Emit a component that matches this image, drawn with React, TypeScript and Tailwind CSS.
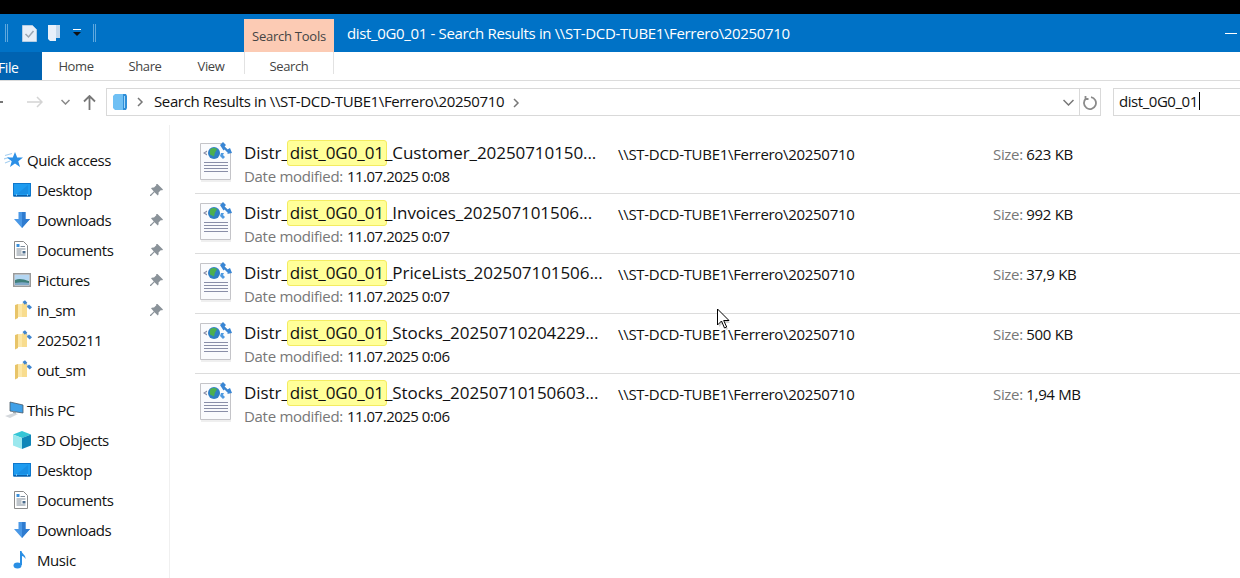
import React from "react";

const font = { fontFamily: '"Open Sans","Noto Sans",Arial,sans-serif' };

function Star() {
  return (
    <svg width="19" height="18" viewBox="0 0 19 18">
      <path d="M1 4.500l7-2M0 8l5-1.500M1 12l5-2" stroke="#a6cff0" strokeWidth="1.200" />
      <path d="M11 1l2.200 5.500h5.800l-4.700 3.700 1.700 5.800-5-3.400-5 3.400 1.700-5.800L3 6.500h5.800z" fill="#2b8fe6" />
    </svg>
  );
}
function DesktopIcon() {
  return (
    <svg width="18" height="14" viewBox="0 0 18 14">
      <rect x="0.500" y="0.500" width="17" height="12.500" fill="#1e9cf0" stroke="#0f78cc" />
      <path d="M1 12h16v1.500H1z" fill="#0b5ea8" />
      <path d="M3 12h1M14 12h1" stroke="#dff0ff" />
      <path d="M4 11L15 2v9z" fill="#1a8fe4" />
    </svg>
  );
}
function DownloadIcon() {
  return (
    <svg width="18" height="18" viewBox="0 0 18 18">
      <path d="M5.500 1h7v7h4.500l-8 9-8-9h4.500z" fill="#4a98e6" />
      <path d="M9 1h3.500v7h4.500l-8 9z" fill="#2f7cd0" />
    </svg>
  );
}
function DocIcon() {
  return (
    <svg width="16" height="18" viewBox="0 0 16 18">
      <path d="M1.500.500h9l4 4v13h-13z" fill="#fff" stroke="#8a8a8a" />
      <path d="M3.500 3h3v3h-3z" fill="#3b90dc" />
      <path d="M7.500 5.500h4.500M3.500 8h9M3.500 10h5M3.500 12h5M3.500 14h9" stroke="#7f8c99" />
      <path d="M9.500 10h3v2.500h-3z" fill="#4a6a8a" />
    </svg>
  );
}
function PicturesIcon() {
  return (
    <svg width="18" height="14" viewBox="0 0 18 14">
      <rect x="0.750" y="0.750" width="16.500" height="12.500" fill="#dbe9f5" stroke="#9a9a9a" strokeWidth="1.500" />
      <path d="M2 2h14v5H2z" fill="#b4d6f2" />
      <path d="M2 7c4-2 8-1 14 1v4H2z" fill="#3f7f7a" />
      <path d="M2 10c5-1 9-1 14 0v2H2z" fill="#7fa8c8" />
    </svg>
  );
}
function FolderShortcut() {
  return (
    <svg width="20" height="20" viewBox="0 0 20 20">
      <path d="M2 5l3-1v14l-3 1.500z" fill="#e8c468" />
      <path d="M5 4h6l3 1v12H5z" fill="#fce7a8" />
      <path d="M9 3.500l5-1V17H9z" fill="#f8dc8e" />
      <path d="M9.500 2L12 .2l2.300 2.500-1 1L15 5.500l1-1 3 2.800-2.300 2.200-3-2.800 1-1L13 3.800l-1.200 1z" fill="#3f86d0" />
    </svg>
  );
}
function ThisPc() {
  return (
    <svg width="20" height="18" viewBox="0 0 20 18">
      <path d="M6 1l13 3v8L6 10z" fill="#3fa0e8" stroke="#4a5a68" strokeWidth="0.800" />
      <path d="M1 15l9-3 4 1-8 4z" fill="#d4d8dc" />
      <path d="M9 10.500l3 .5v1.500l-3-.5z" fill="#9aa4ac" />
    </svg>
  );
}
function Objects3D() {
  return (
    <svg width="18" height="18" viewBox="0 0 18 18">
      <path d="M9 0l9 3.500L9 7 0 3.500z" fill="#35c6d6" />
      <path d="M0 3.500L9 7v11l-9-3.500z" fill="#9be8ee" />
      <path d="M18 3.500L9 7v11l9-3.500z" fill="#0f86b8" />
    </svg>
  );
}
function MusicIcon() {
  return (
    <svg width="14" height="18" viewBox="0 0 14 18">
      <ellipse cx="4.500" cy="14.500" rx="4" ry="3" fill="#2a8fe4" />
      <path d="M7 14V0h1.500c.5 3 4.500 4 4 8-1-2-2.500-3-3.500-3v9z" fill="#2a8fe4" />
    </svg>
  );
}
function Pin() {
  return (
    <svg width="13" height="13" viewBox="0 0 13 13">
      <path d="M7.500 0L13 5.500l-1 1-1-.5-2.500 2.500c.3 1.300 0 2.300-.7 3L4.500 8.200 1 12H0v-1l3.800-3.500L1 4.200c.7-.7 1.700-1 3-.7L6.500 1 6 0z" fill="#8a9299" />
    </svg>
  );
}
function FileIcon() {
  return (
    <svg width="34" height="42" viewBox="0 0 34 42">
      <path d="M2.500 3.500h21l9 9v27h-30z" fill="#fafbfd" stroke="#c4c4c8" />
      <path d="M3 40.500h30v1H3z" fill="#dedede" />
      <path d="M6 22h24v1H6zM6 25h24v1H6zM6 28h24v1H6zM6 31h24v1H6z" fill="#8a8fa8" />
      <path d="M5 13l4-2.500v1.500l-2 1 2 1v1.500z" fill="#8a8fa8" />
      <circle cx="16" cy="13" r="6" fill="#2f7fc4" />
      <path d="M12 9.500c2-2 6-2 7 0l-2 3-1 4-4-2z" fill="#4caf50" />
      <path d="M22 5l3-3 3 3-1.500 1.500 3 3L32 8l2 5-5 1 1-1-3.500-3.500-1 1z" fill="#3a86d4" />
      <path d="M23 13h3l-1 2 2 2-2 2-3-3z" fill="#4f9ae0" />
    </svg>
  );
}

const chevronProps = { fill: "none", strokeWidth: 1.500 };

function Cursor() {
  return (
    <svg className="absolute left-[716px] top-[308px]" width="16" height="24" viewBox="0 0 16 24">
      <path d="M3 3v16l4-4 3 7 2-1-3-6h5z" fill="#00000030" />
      <path d="M1.500 1v16l4-4 3 7 2.200-1-3-6.500h5.300z" fill="#fff" stroke="#000" strokeWidth="1" />
    </svg>
  );
}

function NavItem({ icon, label, pin, top }: { icon: React.ReactNode; label: string; pin?: boolean; top?: boolean }) {
  return (
    <div className={`flex h-[30px] items-center ${top ? "pl-[4px]" : "pl-[13px]"} pr-[6px] text-[15px] tracking-[-0.43px] text-[#111]`}>
      <span className={`flex ${top ? "w-[23px]" : "w-[24px]"} shrink-0 items-center`}>{icon}</span>
      <span className="flex-1">{label}</span>
      {pin && <Pin />}
    </div>
  );
}

const files = [
  { rest: "_Customer_20250710150...", date: "11.07.2025 0:08", size: "623 KB" },
  { rest: "_Invoices_202507101506...", date: "11.07.2025 0:07", size: "992 KB" },
  { rest: "_PriceLists_202507101506...", date: "11.07.2025 0:07", size: "37,9 KB" },
  { rest: "_Stocks_20250710204229...", date: "11.07.2025 0:06", size: "500 KB" },
  { rest: "_Stocks_20250710150603...", date: "11.07.2025 0:06", size: "1,94 MB" },
];

export default function App() {
  return (
    <div className="relative flex h-[578px] w-[1240px] flex-col overflow-hidden bg-white" style={font}>
      <div className="h-[14px] shrink-0 bg-black" />

      {/* title bar */}
      <div className="flex h-[38px] shrink-0 items-center bg-[#0072c6] text-white">
        <div className="ml-[5px] h-[18px] w-[3px] border-x border-[#5fa8de]" />
        <svg className="ml-[14px]" width="15" height="17" viewBox="0 0 15 17">
          <path d="M.5.5h10l4 4v12H.5z" fill="#e6eef8" stroke="#b4cde4" />
          <path d="M3.500 9l3 3 5-6" fill="none" stroke="#9aa6b2" strokeWidth="1.500" />
        </svg>
        <svg className="ml-[11px]" width="13" height="16" viewBox="0 0 13 16">
          <path d="M0 0h8v16H2l-2-2z" fill="#e8f0fa" />
          <path d="M8 0h4v13H8z" fill="#c4d8ec" />
        </svg>
        <svg className="ml-[12px]" width="8" height="8" viewBox="0 0 8 8">
          <path d="M0 0h8v1H0z" fill="#fff" />
          <path d="M0 3h8L4 7z" fill="#111" />
        </svg>
        <div className="ml-[12px] h-[18px] w-[3px] border-x border-[#5fa8de]" />
        <div className="ml-[148px] flex h-[33px] w-[90px] items-center justify-center self-end bg-[#fccbb4] pt-[2px] text-[13px] tracking-[-0.25px] text-[#444]">
          Search Tools
        </div>
        <div className="ml-[13px] flex-1 text-[15px] tracking-[-0.35px]">
          dist_0G0_01 - Search Results in \\ST-DCD-TUBE1\Ferrero\20250710
        </div>
        <div className="mr-[3px] h-px w-[12px] bg-white" />
      </div>

      {/* ribbon tabs */}
      <div className="flex h-[29px] shrink-0 border-b border-[#dcdcdc] text-[13px] tracking-[-0.4px] text-[#444]">
        <div className="-ml-[4px] flex h-[28px] w-[46px] items-center bg-[#0063b1] pl-[2px] pt-[2px] text-[14px] text-white">File</div>
        <div className="flex h-[28px] w-[68px] items-center justify-center pt-[2px]">Home</div>
        <div className="flex h-[28px] w-[70px] items-center justify-center pt-[2px]">Share</div>
        <div className="flex h-[28px] w-[62px] items-center justify-center pt-[2px]">View</div>
        <div className="ml-[2px] flex h-[22px] w-[90px] items-center justify-center border-x border-[#e2e2e2] pt-[8px]">Search</div>
      </div>

      {/* address row */}
      <div className="flex h-[44px] shrink-0 items-start pt-[7px]">
        <div className="flex h-[28px] w-[106px] shrink-0 items-center">
          <div className="h-[2px] w-[3px] bg-[#777]" />
          <svg className="ml-[24px]" width="16" height="12" viewBox="0 0 16 12" {...chevronProps}>
            <path d="M0 6h15M10 1l5 5-5 5" stroke="#d4d4d4" />
          </svg>
          <svg className="ml-[18px]" width="9" height="6" viewBox="0 0 9 6" {...chevronProps}>
            <path d="M.5 1l4 4 4-4" stroke="#888" />
          </svg>
          <svg className="ml-[13px]" width="13" height="15" viewBox="0 0 13 15" fill="none" strokeWidth="1.800">
            <path d="M6.500 15V1M1 6.500L6.500 1 12 6.500" stroke="#777" />
          </svg>
        </div>
        <div className="flex h-[28px] w-[995px] shrink-0 items-center border border-[#d9d9d9] pl-[5px] text-[15px] tracking-[-0.37px] text-[#111]">
          <svg width="16" height="18" viewBox="0 0 16 18">
            <path d="M1 3l2-2h8v16H3l-2-2z" fill="#6fc0f4" />
            <path d="M11 1h3l1 2v12l-1 2h-3z" fill="#2f8fd8" />
            <path d="M12.500 3v12" stroke="#a5d8f8" />
          </svg>
          <svg className="ml-[9px]" width="7" height="10" viewBox="0 0 7 10" {...chevronProps}>
            <path d="M1 1l4 4-4 4" stroke="#777" />
          </svg>
          <span className="mb-[2px] ml-[10px] flex-1">
            Search Results in \\ST-DCD-TUBE1\Ferrero\20250710
            <svg className="ml-[9px] inline" width="7" height="10" viewBox="0 0 7 10" {...chevronProps}>
              <path d="M1 1l4 4-4 4" stroke="#777" />
            </svg>
          </span>
          <svg className="mr-[5px]" width="11" height="7" viewBox="0 0 11 7" {...chevronProps}>
            <path d="M.5 1l5 5 5-5" stroke="#777" />
          </svg>
          <div className="flex h-full w-[21px] items-center justify-center border-l border-[#d9d9d9]">
            <svg width="15" height="15" viewBox="0 0 15 15" {...chevronProps}>
              <path d="M8 2.100A6 6 0 1 1 3 3.500M2.500 1v3h3" stroke="#8a8a8a" strokeWidth="1.800" />
            </svg>
          </div>
        </div>
        <div className="ml-[12px] flex h-[28px] w-[127px] shrink-0 items-center border border-r-0 border-[#d9d9d9] pb-[2px] pl-[5px] text-[15px] tracking-[-0.45px] text-[#111]">
          dist_0G0_01
          <div className="ml-px h-[18px] w-px bg-black" />
        </div>
      </div>

      <div className="flex min-h-0 flex-1">
        {/* sidebar */}
        <div className="w-[170px] shrink-0 border-r border-[#f0f0f0] pt-[20px]">
          <NavItem top icon={<Star />} label="Quick access" />
          <NavItem icon={<DesktopIcon />} label="Desktop" pin />
          <NavItem icon={<DownloadIcon />} label="Downloads" pin />
          <NavItem icon={<DocIcon />} label="Documents" pin />
          <NavItem icon={<PicturesIcon />} label="Pictures" pin />
          <NavItem icon={<FolderShortcut />} label="in_sm" pin />
          <NavItem icon={<FolderShortcut />} label="20250211" />
          <NavItem icon={<FolderShortcut />} label="out_sm" />
          <div className="h-[10px]" />
          <NavItem top icon={<ThisPc />} label="This PC" />
          <NavItem icon={<Objects3D />} label="3D Objects" />
          <NavItem icon={<DesktopIcon />} label="Desktop" />
          <NavItem icon={<DocIcon />} label="Documents" />
          <NavItem icon={<DownloadIcon />} label="Downloads" />
          <NavItem icon={<MusicIcon />} label="Music" />
        </div>

        {/* results */}
        <div className="ml-[25px] flex-1 pt-[9px]">
          {files.map((f, i) => (
            <div key={i} className={`flex h-[60px] ${i < 4 ? "border-b border-[#dcdcdc]" : ""}`}>
              <div className="w-[49px] shrink-0 pl-[3px] pt-[6px]">
                <FileIcon />
              </div>
              <div className="w-[374px] shrink-0">
                <div className="mt-[6px] h-[26px] whitespace-nowrap text-[17px] leading-[26px] tracking-[-0.07px] text-[#111]">
                  Distr_
                  <span className="-mx-[2px] inline-block h-[26px] rounded-[3px] border border-[#f4ec60] bg-[#ffff99] px-[2px] leading-[24px]">dist_0G0_01</span>
                  {f.rest}
                </div>
                <div className="whitespace-nowrap text-[15px] leading-[20px] text-[#777]">
                  <span className="tracking-[-0.3px]">Date modified:</span>
                  <span className="ml-[4px] tracking-[-0.5px] text-[#111]">{f.date}</span>
                </div>
              </div>
              <div className="w-[375px] shrink-0 pt-[10px] text-[15px] leading-[20px] tracking-[-0.3px] text-[#111]">
                \\ST-DCD-TUBE1\Ferrero\20250710
              </div>
              <div className="pt-[10px] text-[15px] leading-[20px] tracking-[-0.33px] text-[#777]">
                Size: <span className="text-[#111]">{f.size}</span>
              </div>
            </div>
          ))}
        </div>
      </div>

      <Cursor />
    </div>
  );
}
